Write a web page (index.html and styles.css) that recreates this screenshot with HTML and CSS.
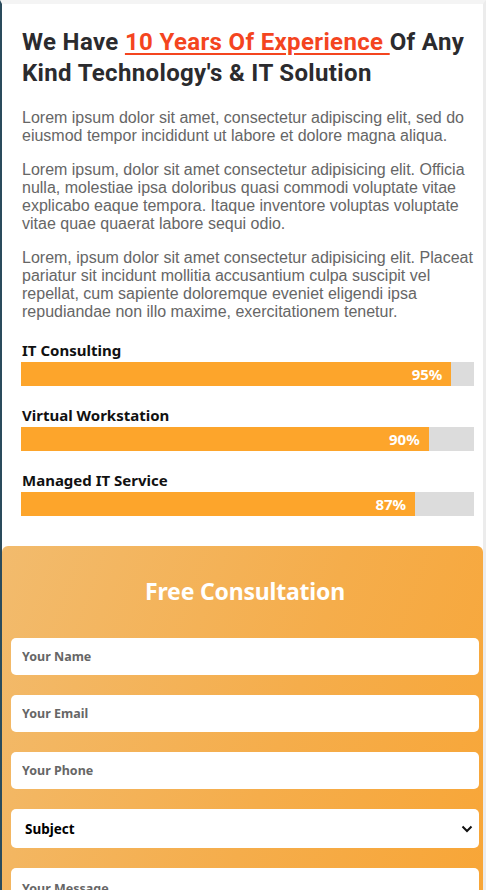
FILE: index.html
```html
<!DOCTYPE html>
<html lang="en">
<head>
<meta charset="utf-8">
<title>About</title>
<link rel="stylesheet" href="styles.css">
</head>
<body>
<div class="frame">
  <section class="about">
    <h2 class="title">We Have <span class="hl">10 Years Of Experience </span>Of Any Kind Technology's &amp; IT Solution</h2>
    <p>Lorem ipsum dolor sit amet, consectetur adipiscing elit, sed do eiusmod tempor incididunt ut labore et dolore magna aliqua.</p>
    <p>Lorem ipsum, dolor sit amet consectetur adipisicing elit. Officia nulla, molestiae ipsa doloribus quasi commodi voluptate vitae explicabo eaque tempora. Itaque inventore voluptas voluptate vitae quae quaerat labore sequi odio.</p>
    <p>Lorem, ipsum dolor sit amet consectetur adipisicing elit. Placeat pariatur sit incidunt mollitia accusantium culpa suscipit vel repellat, cum sapiente doloremque eveniet eligendi ipsa repudiandae non illo maxime, exercitationem tenetur.</p>
    <div class="skills">
      <div class="skill">
        <h4>IT Consulting</h4>
        <div class="track"><div class="fill" style="width:95%">95%</div></div>
      </div>
      <div class="skill">
        <h4>Virtual Workstation</h4>
        <div class="track"><div class="fill" style="width:90%">90%</div></div>
      </div>
      <div class="skill">
        <h4>Managed IT Service</h4>
        <div class="track"><div class="fill" style="width:87%">87%</div></div>
      </div>
    </div>
  </section>
  <section class="consult">
    <h3>Free Consultation</h3>
    <form class="form">
      <input type="text" placeholder="Your Name">
      <input type="email" placeholder="Your Email">
      <input type="text" placeholder="Your Phone">
      <div class="select-wrap">
        <select><option>Subject</option></select>
        <svg class="chev" width="12" height="8" viewBox="0 0 12 8"><path d="M1.5 1.5 L6 6 L10.5 1.5" fill="none" stroke="#111" stroke-width="2"/></svg>
      </div>
      <textarea placeholder="Your Message"></textarea>
    </form>
  </section>
</div>
</body>
</html>
```
FILE: styles.css
```css
html, body { margin: 0; padding: 0; background: #fff; }
body { font-family: "Liberation Sans", Arial, sans-serif; overflow: hidden; }
.frame {
  border-left: 2px solid #2a4b5c;
  border-right: 3px solid #ececec;
  border-top: 4px solid #f4f4f4;
  height: 890px;
  overflow: hidden;
  box-sizing: border-box;
}
.about { padding: 23px 9px 30px 19px; }
.title {
  margin: 0 0 20px;
  font-family: Roboto, sans-serif;
  font-weight: 700;
  font-size: 24px;
  line-height: 31px;
  color: #2b2b2e;
  letter-spacing: 0.35px;
  padding-left: 1px;
}
.hl { color: #f4451f; text-decoration: underline; text-underline-offset: 3px; text-decoration-thickness: 2px; }
.about p {
  margin: 0 0 16px;
  font-size: 16px;
  line-height: 18px;
  color: #666;
  padding-left: 1px;
}
.skills { display: flex; flex-direction: column; gap: 21px; margin-top: 21px; }
.skill h4 {
  margin: 0 0 3px;
  font-family: "Noto Sans", sans-serif;
  font-weight: 700;
  font-size: 15px;
  line-height: 17px;
  color: #111;
  letter-spacing: 0px;
  padding-left: 1px;
}
.track { background: #dcdcdc; height: 24px; }
.fill {
  background: #fda52b;
  height: 100%;
  color: #fff;
  font-family: "Noto Sans", sans-serif;
  font-weight: 700;
  font-size: 15px;
  line-height: 24px;
  text-align: right;
  padding-right: 9px;
  box-sizing: border-box;
}
.consult {
  background: linear-gradient(110deg, #f2bb6d 0%, #f5ad4b 55%, #f8a535 100%);
  border-radius: 6px 6px 0 0;
  padding: 28px 4px 0 9px;
}
.consult h3 {
  margin: 0 0 30px;
  text-align: center;
  color: #fff;
  font-family: "Noto Sans", sans-serif;
  font-weight: 700;
  font-size: 23px;
  line-height: 34px;
  letter-spacing: -0.2px;
}
.form { display: flex; flex-direction: column; gap: 20px; }
.form input, .form select, .form textarea {
  display: block;
  width: 100%;
  box-sizing: border-box;
  border: none;
  border-radius: 5px;
  background: #fff;
  height: 37px;
  padding: 0 11px;
  font-family: "Noto Sans", sans-serif;
  font-weight: 700;
  font-size: 12.5px;
  color: #111;
  outline: none;
}
.form input::placeholder, .form textarea::placeholder { color: #666; opacity: 1; }
.select-wrap { position: relative; }
.form select {
  -webkit-appearance: none;
  appearance: none;
  height: 39px;
  padding-left: 14px;
  font-size: 13.5px;
  color: #000;
}
.chev { position: absolute; right: 6px; top: 16px; }
.form textarea { height: 100px; padding-top: 12px; resize: none; }
```
